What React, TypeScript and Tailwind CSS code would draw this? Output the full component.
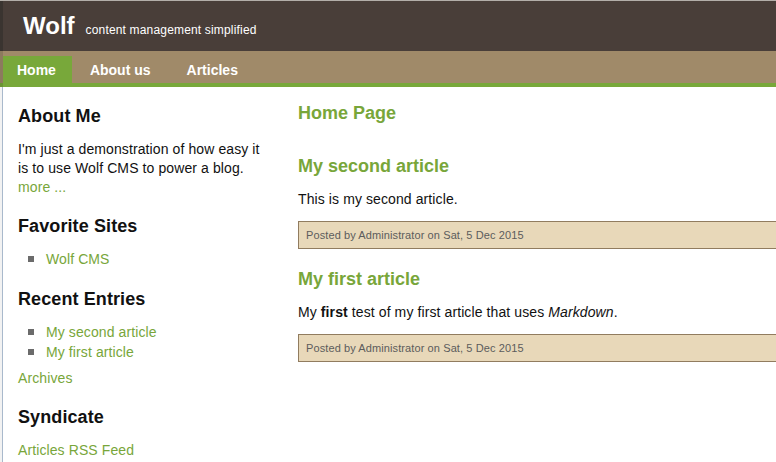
import React from 'react';

const green = 'text-[#78a63a]';

function Bullet({ children }: { children: React.ReactNode }) {
  return (
    <li className="flex items-center h-[20px] leading-[20px]">
      <span className="ml-[10px] mr-[12px] block w-[6px] h-[6px] bg-[#6b6b6b]" />
      <a className={green}>{children}</a>
    </li>
  );
}

function SideHeading({ children, className = '' }: { children: React.ReactNode; className?: string }) {
  return <h3 className={`text-[18px] leading-[22px] font-bold text-[#111] ${className}`}>{children}</h3>;
}

function Meta() {
  return (
    <div className="mt-[12px] h-[28px] border border-[#917c5f] bg-[#e8d8b9] pl-[7px] flex items-center text-[11px] tracking-[0.1px] text-[#5c5c5c]">
      Posted by Administrator on Sat, 5 Dec 2015
    </div>
  );
}

export default function App() {
  return (
    <div className="w-[776px] h-[462px] overflow-hidden bg-white border-t border-[#b3aea9] flex font-['Liberation_Sans',Arial,sans-serif] text-[14px] text-[#111]">
      <div className="w-[3px] flex flex-col shrink-0">
        <div className="h-[50px] bg-[#3a3430]" />
        <div className="h-[32px] bg-[#8c7a5e]" />
        <div className="h-[4px] bg-[#6a9433]" />
        <div className="flex-1 bg-[#f2f2f2] border-r border-[#a9b9cc]" />
      </div>
      <div className="flex-1 min-w-0 flex flex-col">
        <header className="h-[50px] bg-[#493e39] flex items-baseline pl-[20px] pt-[13px] text-white">
          <span className="text-[24px] leading-[24px] font-bold">Wolf</span>
          <span className="ml-[11px] text-[12px] tracking-[0.17px]">content management simplified</span>
        </header>
        <nav className="h-[32px] bg-[#a08a69] flex items-end text-white text-[14px] font-bold">
          <a className="h-[27px] flex items-center pt-[1px] pl-[14px] pr-[16px] mr-[4px] bg-[#78a83a]">Home</a>
          <a className="h-[27px] flex items-center pt-[1px] pl-[14px] pr-[16px] mr-[5px]">About us</a>
          <a className="h-[27px] flex items-center pt-[1px] pl-[15px] pr-[16px] mr-[4px]">Articles</a>
        </nav>
        <div className="h-[4px] bg-[#78a83a]" />
        <div className="flex flex-1 tracking-[0.1px]">
          <aside className="w-[295px] shrink-0 pl-[15px] pt-[18px]">
            <SideHeading>About Me</SideHeading>
            <p className="mt-[13px] leading-[19px] w-[255px]">
              I'm just a demonstration of how easy it is to use Wolf CMS to power a blog.{' '}
              <a className={green}>more ...</a>
            </p>
            <SideHeading className="mt-[18px]">Favorite Sites</SideHeading>
            <ul className="mt-[12px]">
              <Bullet>Wolf CMS</Bullet>
            </ul>
            <SideHeading className="mt-[19px]">Recent Entries</SideHeading>
            <ul className="mt-[12px]">
              <Bullet>My second article</Bullet>
              <Bullet>My first article</Bullet>
            </ul>
            <p className="mt-[6px] leading-[20px]">
              <a className={green}>Archives</a>
            </p>
            <SideHeading className="mt-[18px]">Syndicate</SideHeading>
            <p className="mt-[12px] leading-[20px]">
              <a className={green}>Articles RSS Feed</a>
            </p>
          </aside>
          <main className="w-[520px] shrink-0 pt-[15px]">
            <h1 className={`text-[18px] leading-[22px] font-bold tracking-normal ${green}`}>Home Page</h1>
            <h2 className={`mt-[31px] text-[18px] leading-[22px] font-bold tracking-normal ${green}`}>My second article</h2>
            <p className="mt-[12px] leading-[20px]">This is my second article.</p>
            <Meta />
            <h2 className={`mt-[19px] text-[18px] leading-[22px] font-bold tracking-normal ${green}`}>My first article</h2>
            <p className="mt-[12px] leading-[20px]">
              My <strong>first</strong> test of my first article that uses <em>Markdown</em>.
            </p>
            <Meta />
          </main>
        </div>
      </div>
    </div>
  );
}
